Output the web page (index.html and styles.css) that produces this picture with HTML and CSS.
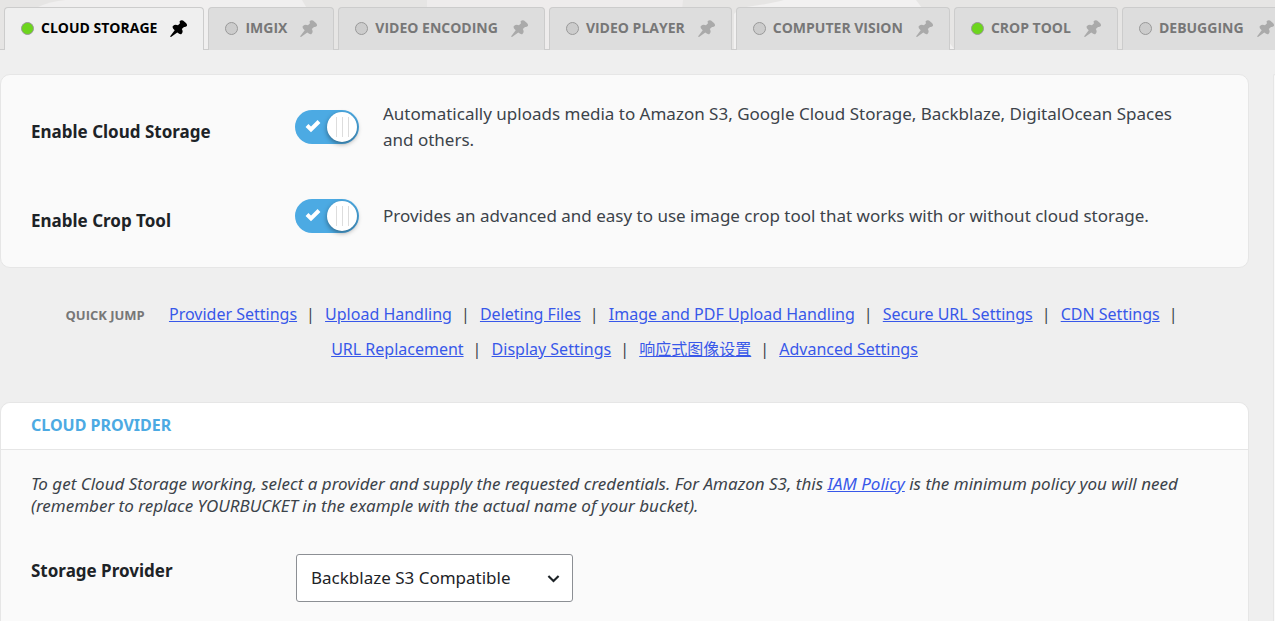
FILE: index.html
```html
<!DOCTYPE html>
<html lang="en">
<head>
  <meta charset="UTF-8" />
  <meta name="viewport" content="width=device-width, initial-scale=1.0"/>
  <title>Cloud Storage Settings</title>
  <link rel="stylesheet" href="styles.css">
</head>
<body>

<svg class="sprite" aria-hidden="true">
  <symbol id="pin" viewBox="0 0 17 17">
    <path d="M9.500 1.500Q11 -.3 13 .5L16 3Q17.800 5 16.500 6.300Q15.500 7.300 14 7L11.800 9Q13.600 12 11.500 14Q10.200 15 7.300 12.600L1 17L0 16.400L4.700 10.200Q1.500 7.500 3 6Q5 4 8 5.300L10 3.200Z"/>
  </symbol>
</svg>

<header class="top">
  <svg class="top-art" viewBox="0 0 1275 50" preserveAspectRatio="none" aria-hidden="true">
    <path fill="#f0efef" d="M36 8Q50 1 66 0H302L309 12V50H36z"/>
    <path fill="#eeecec" d="M427 0H683L678 50H427z"/>
    <path fill="#f2f1f1" d="M740 8Q770 4 784 0H916L922 8L955 50H734V14z"/>
  </svg>
  <nav class="tabs">
    <div class="tab active">
      <a href="#storage"><span class="dot on"></span>CLOUD STORAGE</a>
      <button class="pin" aria-label="Pin Cloud Storage"><svg><use href="#pin"/></svg></button>
    </div>
    <div class="tab">
      <a href="#imgix"><span class="dot"></span>IMGIX</a>
      <button class="pin" aria-label="Pin Imgix"><svg><use href="#pin"/></svg></button>
    </div>
    <div class="tab">
      <a href="#encoding"><span class="dot"></span>VIDEO ENCODING</a>
      <button class="pin" aria-label="Pin Video Encoding"><svg><use href="#pin"/></svg></button>
    </div>
    <div class="tab">
      <a href="#player"><span class="dot"></span>VIDEO PLAYER</a>
      <button class="pin" aria-label="Pin Video Player"><svg><use href="#pin"/></svg></button>
    </div>
    <div class="tab">
      <a href="#vision"><span class="dot"></span>COMPUTER VISION</a>
      <button class="pin" aria-label="Pin Computer Vision"><svg><use href="#pin"/></svg></button>
    </div>
    <div class="tab">
      <a href="#crop"><span class="dot on"></span>CROP TOOL</a>
      <button class="pin" aria-label="Pin Crop Tool"><svg><use href="#pin"/></svg></button>
    </div>
    <div class="tab">
      <a href="#debugging"><span class="dot"></span>DEBUGGING</a>
      <button class="pin" aria-label="Pin Debugging"><svg><use href="#pin"/></svg></button>
    </div>
  </nav>
</header>

<div class="layout">
  <main class="main">
    <section class="card features">
      <div class="row">
        <label class="name" for="enableStorage">Enable Cloud Storage</label>
        <span class="switch">
          <input type="checkbox" id="enableStorage" checked>
          <svg class="check" viewBox="0 0 16 14" aria-hidden="true"><path d="M2 6.5L6 10.500L14 2.500"/></svg>
          <span class="knob"><i></i><i></i><i></i></span>
        </span>
        <p>Automatically uploads media to Amazon S3, Google Cloud Storage, Backblaze, DigitalOcean Spaces and others.</p>
      </div>
      <div class="row">
        <label class="name" for="enableCrop">Enable Crop Tool</label>
        <span class="switch">
          <input type="checkbox" id="enableCrop" checked>
          <svg class="check" viewBox="0 0 16 14" aria-hidden="true"><path d="M2 6.5L6 10.500L14 2.500"/></svg>
          <span class="knob"><i></i><i></i><i></i></span>
        </span>
        <p>Provides an advanced and easy to use image crop tool that works with or without cloud storage.</p>
      </div>
    </section>

    <nav class="jump">
      <span class="jump-title">QUICK JUMP</span>
      <span class="item"><a href="#provider">Provider Settings</a></span>
      <span class="item"><a href="#upload">Upload Handling</a></span>
      <span class="item"><a href="#deleting">Deleting Files</a></span>
      <span class="item"><a href="#pdf">Image and PDF Upload Handling</a></span>
      <span class="item"><a href="#secure">Secure URL Settings</a></span>
      <span class="item"><a href="#cdn">CDN Settings</a></span>
      <span class="item"><a href="#replacement">URL Replacement</a></span>
      <span class="item"><a href="#display">Display Settings</a></span>
      <span class="item"><a href="#responsive" lang="zh">响应式图像设置</a></span>
      <span class="item"><a href="#advanced">Advanced Settings</a></span>
    </nav>

    <section class="card" id="provider">
      <h2>CLOUD PROVIDER</h2>
      <div class="card-body">
        <p class="description">To get Cloud Storage working, select a provider and supply the requested credentials. For Amazon S3, this <a href="#policy">IAM Policy</a> is the minimum policy you will need (remember to replace YOURBUCKET in the example with the actual name of your bucket).</p>
        <div class="field">
          <label class="name" for="storageProvider">Storage Provider</label>
          <div class="select">
            <select id="storageProvider">
              <option>Backblaze S3 Compatible</option>
            </select>
            <svg viewBox="0 0 20 20" aria-hidden="true"><path d="M4 7L10 13L16 7"/></svg>
          </div>
        </div>
      </div>
    </section>
  </main>
  <aside class="sidebar card"></aside>
</div>

</body>
</html>
```
FILE: styles.css
```css
* {
  box-sizing: border-box;
}
body {
  margin: 0;
  background: #efefef;
  color: #3c434a;
  font-family: "Noto Sans", "Noto Sans CJK SC", sans-serif;
  font-size: 17px;
  line-height: 26px;
}
a {
  color: #3858e9;
}
p {
  margin: 0;
}
.sprite {
  display: none;
}

/* tabs */
.top {
  position: relative;
  overflow: hidden;
  background: #e6e5e4;
}
.top-art {
  position: absolute;
  width: 100%;
  height: 100%;
}
.tabs {
  position: relative;
  display: flex;
  gap: 4px;
  padding: 7px 0 0 4px;
  border-bottom: 1px solid #ccc;
}
.tab {
  display: flex;
  flex: none;
  align-items: center;
  gap: 13px;
  height: 43px;
  margin-bottom: -1px;
  padding: 0 16px 2px;
  border: 1px solid #ccc;
  border-bottom: 0;
  border-radius: 4px 4px 0 0;
  background: #ddd;
}
.tab a {
  display: flex;
  align-items: center;
  gap: 7px;
  color: #777;
  font-family: "Open Sans", sans-serif;
  font-size: 14px;
  font-weight: 700;
  text-decoration: none;
  white-space: nowrap;
}
.tab.active {
  background: #efefef;
}
.tab.active a {
  color: #000;
}
.dot {
  width: 13px;
  height: 13px;
  border: 1px solid #999;
  border-radius: 50%;
  background: #ccc;
}
.dot.on {
  background: #6dd51d;
}
.pin {
  padding: 0;
  border: 0;
  background: none;
  line-height: 0;
}
.pin svg {
  width: 17px;
  height: 17px;
  fill: #aaa;
}
.active .pin svg {
  fill: #000;
}

/* cards */
.layout {
  display: grid;
  grid-template-columns: 1fr 2px;
  gap: 24px;
  height: calc(100vh - 50px);
  padding-top: 24px;
  overflow: hidden;
}
.card {
  border: 1px solid #e6e6e6;
  border-radius: 10px;
  background: #fafafa;
}
.sidebar {
  border-right: 0;
  border-radius: 10px 0 0 10px;
}
.features {
  display: grid;
  gap: 37px;
  padding: 26px 60px 25px 30px;
}
.row, .field {
  display: grid;
  grid-template-columns: 265px 1fr;
}
.row {
  grid-template-columns: 264px 64px 1fr;
  align-items: center;
  min-height: 52px;
}
.row p {
  margin-left: 24px;
}
.name {
  color: #1d2327;
  font-weight: 700;
}
.row .name {
  padding-top: 10px;
}

/* switch */
.switch {
  position: relative;
  width: 64px;
  height: 34px;
  border-radius: 17px;
  background: #4caae3;
}
.switch input {
  position: absolute;
  inset: 0;
  width: 100%;
  height: 100%;
  margin: 0;
  opacity: 0;
}
.check {
  position: absolute;
  top: 9px;
  left: 10px;
  width: 16px;
  height: 14px;
  fill: none;
  stroke: #fff;
  stroke-width: 4;
}
.knob {
  position: absolute;
  top: 2px;
  right: 2px;
  display: flex;
  align-items: center;
  justify-content: center;
  gap: 5px;
  width: 30px;
  height: 30px;
  border-radius: 50%;
  background: #fff;
  box-shadow: 0 2px 5px rgba(0, 0, 0, 0.4);
  pointer-events: none;
}
.knob i {
  width: 1px;
  height: 20px;
  background: #ddd;
}

/* quick jump */
.jump {
  padding: 29px 60px 36px;
  font-size: 16px;
  line-height: 34px;
  text-align: center;
}
.jump-title {
  margin-right: 20px;
  color: #777;
  font-family: "Open Sans", sans-serif;
  font-size: 13px;
  font-weight: 700;
}
.item {
  display: inline-block;
  height: 34px;
  white-space: nowrap;
}
.item::after {
  content: "|";
  margin: 0 6px 0 9px;
}
.item:last-child::after {
  content: none;
}

/* provider */
h2 {
  margin: 0;
  padding: 9px 30px 11px;
  border-bottom: 1px solid #e6e6e6;
  border-radius: 10px 10px 0 0;
  background: #fff;
  color: #4caae3;
  font-size: 16px;
  font-weight: 700;
  line-height: 26px;
}
.card-body {
  padding: 23px 60px 40px 30px;
}
.description {
  font-style: italic;
  line-height: 22px;
}
.field {
  margin-top: 37px;
}
.field .name {
  padding-top: 4px;
}
.select {
  position: relative;
  width: 277px;
}
.select select {
  width: 100%;
  height: 48px;
  padding: 0 14px;
  border: 1px solid #8c8f94;
  border-radius: 3px;
  background: #fff;
  color: #1d2327;
  font: inherit;
  appearance: none;
}
.select svg {
  position: absolute;
  top: 16px;
  right: 11px;
  width: 17px;
  height: 17px;
  fill: none;
  stroke: #1d2327;
  stroke-width: 2.500;
  pointer-events: none;
}
```
